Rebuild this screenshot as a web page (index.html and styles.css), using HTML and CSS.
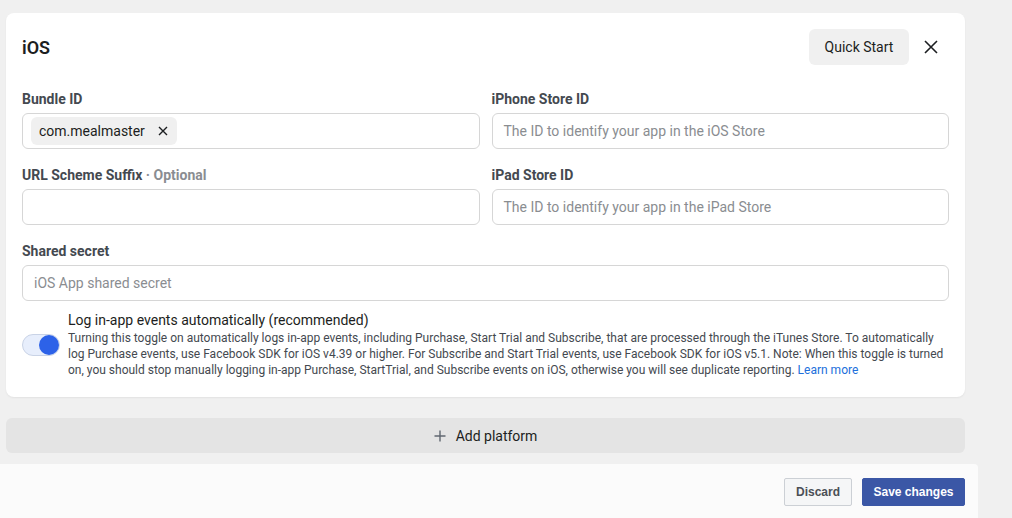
FILE: index.html
```html
<!DOCTYPE html>
<html>
<head>
<meta charset="utf-8">
<link rel="stylesheet" href="styles.css">
</head>
<body>
<div class="page">
  <section class="card">
    <header class="card-head">
      <h2 class="title">iOS</h2>
      <div class="head-actions">
        <button class="quick">Quick Start</button>
        <button class="close" aria-label="Close">
          <svg width="16" height="16" viewBox="0 0 16 16"><path d="M2 2 L14 14 M14 2 L2 14" stroke="#1c1e21" stroke-width="1.6" fill="none"/></svg>
        </button>
      </div>
    </header>
    <div class="grid">
      <div class="field">
        <label class="label">Bundle ID</label>
        <div class="input">
          <span class="chip">com.mealmaster
            <svg width="10" height="10" viewBox="0 0 10 10"><path d="M1 1 L9 9 M9 1 L1 9" stroke="#1c1e21" stroke-width="1.4" fill="none"/></svg>
          </span>
        </div>
      </div>
      <div class="field">
        <label class="label">iPhone Store ID</label>
        <div class="input"><span class="ph">The ID to identify your app in the iOS Store</span></div>
      </div>
      <div class="field">
        <label class="label">URL Scheme Suffix <span class="opt">· Optional</span></label>
        <div class="input"></div>
      </div>
      <div class="field">
        <label class="label">iPad Store ID</label>
        <div class="input"><span class="ph">The ID to identify your app in the iPad Store</span></div>
      </div>
      <div class="field wide">
        <label class="label">Shared secret</label>
        <div class="input"><span class="ph">iOS App shared secret</span></div>
      </div>
    </div>
    <div class="toggle-row">
      <div class="toggle"><span class="knob"></span></div>
      <div class="toggle-text">
        <div class="toggle-title">Log in-app events automatically (recommended)</div>
        <p class="desc">Turning this toggle on automatically logs in-app events, including Purchase, Start Trial and Subscribe, that are processed through the iTunes Store. To automatically log Purchase events, use Facebook SDK for iOS v4.39 or higher. For Subscribe and Start Trial events, use Facebook SDK for iOS v5.1. Note: When this toggle is turned on, you should stop manually logging in-app Purchase, StartTrial, and Subscribe events on iOS, otherwise you will see duplicate reporting. <a class="link">Learn more</a></p>
      </div>
    </div>
  </section>
  <div class="add-platform">
    <svg width="12" height="12" viewBox="0 0 12 12"><path d="M6 0.5 V11.5 M0.5 6 H11.5" stroke="#606770" stroke-width="1.4" fill="none"/></svg>
    <span>Add platform</span>
  </div>
</div>
<footer class="footer">
  <button class="btn discard">Discard</button>
  <button class="btn save">Save changes</button>
</footer>
</body>
</html>
```

FILE: styles.css
```css
* { box-sizing: border-box; }
html, body { margin: 0; padding: 0; }
body {
  background: #f0f0f0;
  font-family: Roboto, "Liberation Sans", sans-serif;
  color: #1c1e21;
  width: 1012px;
  height: 518px;
  overflow: hidden;
}
.page {
  width: 965px;
  padding: 13px 0 0 6px;
}
.card {
  background: #fff;
  border-radius: 8px;
  padding: 16px 16px 19px 16px;
  box-shadow: 0 1px 2px rgba(0,0,0,0.06);
}
.card-head {
  display: flex;
  align-items: center;
  justify-content: space-between;
  height: 36px;
}
.title {
  margin: 0;
  font-size: 18px;
  font-weight: 600;
  color: #1c1e21;
}
.head-actions {
  display: flex;
  align-items: center;
  gap: 4px;
}
.quick {
  height: 36px;
  width: 100px;
  border: none;
  border-radius: 6px;
  background: #f0f0f0;
  font-family: Roboto, sans-serif;
  font-size: 14px;
  color: #1c1e21;
  padding: 0;
}
.close {
  width: 36px;
  height: 36px;
  border: none;
  background: transparent;
  display: flex;
  align-items: center;
  justify-content: center;
  padding: 0;
}
.grid {
  margin-top: 24px;
  display: grid;
  grid-template-columns: 1fr 1fr;
  column-gap: 12px;
  row-gap: 16px;
}
.field { display: flex; flex-direction: column; gap: 4px; }
.field.wide { grid-column: 1 / span 2; }
.label {
  font-size: 14px;
  font-weight: 700;
  line-height: 20px;
  color: #444950;
}
.opt { color: #8a8d91; }
.input {
  height: 36px;
  border: 1px solid #d6d6d6;
  border-radius: 6px;
  display: flex;
  align-items: center;
  padding: 0 11px;
  font-size: 14px;
}
.ph { color: #8a8d91; }
.chip {
  margin-left: -3px;
  height: 28px;
  background: #f0f0f0;
  border-radius: 6px;
  display: flex;
  align-items: center;
  gap: 13px;
  padding: 0 9px 0 8px;
  font-size: 14px;
  color: #1c1e21;
}
.toggle-row {
  margin-top: 10px;
  display: flex;
  align-items: center;
  gap: 8px;
}
.toggle {
  flex: none;
  width: 38px;
  height: 22px;
  border-radius: 11px;
  background: #e7eefc;
  border: 1px solid #c9d3e6;
  display: flex;
  align-items: center;
  justify-content: flex-end;
}
.knob {
  width: 20px;
  height: 20px;
  border-radius: 50%;
  background: #2d62e8;
}
.toggle-title {
  font-size: 14px;
  line-height: 18px;
  color: #1c1e21;
}
.desc {
  margin: 1px 0 0 0;
  font-size: 12px;
  line-height: 16px;
  color: #444950;
}
.link { color: #216fdb; }
.add-platform {
  margin-top: 21px;
  height: 35px;
  background: #e4e4e4;
  border-radius: 6px;
  display: flex;
  align-items: center;
  justify-content: center;
  gap: 10px;
  font-size: 14px;
  color: #1c1e21;
}
.footer {
  margin-top: 11px;
  width: 978px;
  height: 60px;
  background: #fbfbfb;
  border-top-right-radius: 4px;
  display: flex;
  justify-content: flex-end;
  align-items: flex-start;
  gap: 10px;
  padding: 14px 13px 0 0;
}
.btn {
  height: 28px;
  border-radius: 2px;
  font-family: "Liberation Sans", Arial, sans-serif;
  font-weight: 700;
  font-size: 12px;
  padding: 0 6px;
  white-space: nowrap;
}
.discard {
  width: 68px;
  background: #f5f6f7;
  border: 1px solid #ccd0d5;
  color: #4b4f56;
}
.save {
  width: 103px;
  background: #3b57a6;
  border: 1px solid #3b57a6;
  color: #fff;
}
```
